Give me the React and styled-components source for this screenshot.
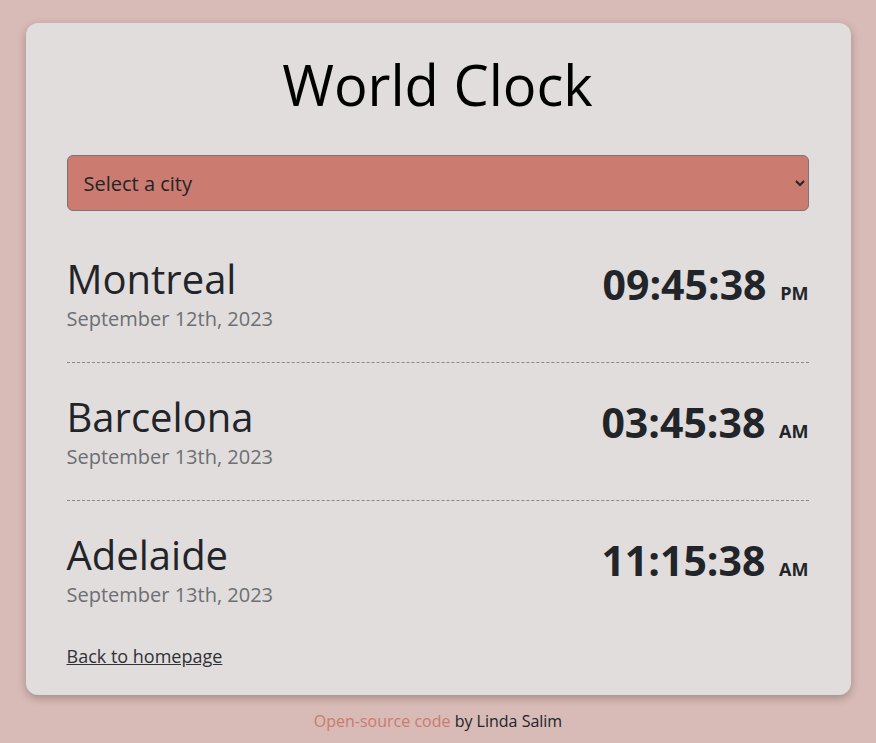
import styled, { createGlobalStyle } from "styled-components"

const GlobalStyle = createGlobalStyle`
    body {
        margin: 0;
        background: #d8bab6;
        font-family: "Open Sans", "Noto Sans", sans-serif;
        color: #212529;
    }
`

const cities = [
    { name: "Montreal", date: "September 12th, 2023", time: "09:45:38", period: "PM" },
    { name: "Barcelona", date: "September 13th, 2023", time: "03:45:38", period: "AM" },
    { name: "Adelaide", date: "September 13th, 2023", time: "11:15:38", period: "AM" },
]

export default function App() {
    return (
        <>
            <GlobalStyle />
            <Page>
                <Card>
                    <Title>World Clock</Title>
                    <Select defaultValue="">
                        <option value="">Select a city</option>
                        <option value="local">My current location</option>
                        <option value="Europe/Paris">Paris</option>
                        <option value="Asia/Tokyo">Tokyo</option>
                    </Select>
                    <Cities>
                        {cities.map((city) => (
                            <City key={city.name}>
                                <div>
                                    <CityName>{city.name}</CityName>
                                    <CityDate>{city.date}</CityDate>
                                </div>
                                <Time>
                                    {city.time} <small>{city.period}</small>
                                </Time>
                            </City>
                        ))}
                    </Cities>
                    <BackLink href="#">Back to homepage</BackLink>
                </Card>
                <Footer>
                    <a href="#">Open-source code</a> by Linda Salim
                </Footer>
            </Page>
        </>
    )
}

const Page = styled.div`
    width: 825px;
    margin: 23px auto 0;
`

const Card = styled.div`
    background: #e2dddd;
    border-radius: 12px;
    box-shadow: 0 3px 8px rgba(0, 0, 0, 0.25);
    padding: 28px 42px 27px 41px;
`

const Title = styled.h1`
    margin: 0 0 37px;
    text-align: center;
    font-size: 56px;
    font-weight: 400;
    line-height: 1.2;
    color: #000;
`

const Select = styled.select`
    display: block;
    width: 100%;
    height: 56px;
    padding: 0 12px;
    font-family: inherit;
    font-size: 20px;
    color: #212529;
    background: #cb7b6f;
    border: 1px solid #7a7474;
    border-radius: 6px;
`

const Cities = styled.div`
    margin-top: 14px;
`

const City = styled.div`
    display: flex;
    justify-content: space-between;
    align-items: flex-start;
    padding: 30px 0;
    border-bottom: 1px dashed #8d8888;
    &:last-child {
        border-bottom: none;
        padding-bottom: 36px;
    }
`

const CityName = styled.h2`
    margin: 0;
    font-size: 40px;
    font-weight: 400;
    line-height: 1.2;
`

const CityDate = styled.div`
    margin-top: 2px;
    font-size: 20px;
    color: #6c6f73;
`

const Time = styled.div`
    font-size: 41px;
    font-weight: 700;
    line-height: 1.2;
    margin-top: 5px;
    small {
        font-size: 18px;
        margin-left: 3px;
    }
`

const BackLink = styled.a`
    display: inline-block;
    font-size: 18px;
    color: #2f3236;
`

const Footer = styled.div`
    text-align: center;
    padding: 15px 0;
    font-size: 16px;
    font-weight: 500;
    color: #212529;
    a {
        color: #cb7b6f;
        text-decoration: none;
    }
`
